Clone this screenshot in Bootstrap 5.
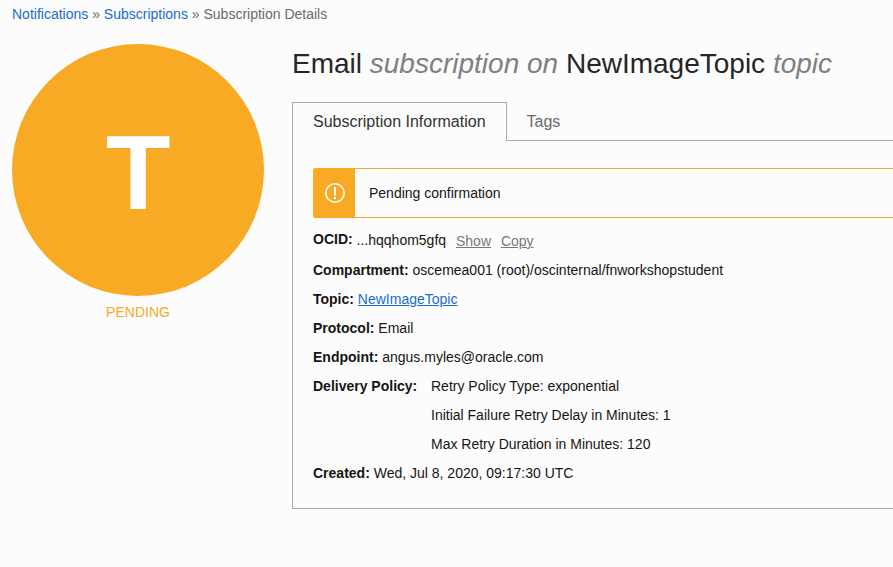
<!DOCTYPE html>
<html lang="en"><head><meta charset="utf-8"><title>Subscription Details</title>
<link rel="stylesheet" href="https://cdn.jsdelivr.net/npm/bootstrap@5.3.0/dist/css/bootstrap.min.css">
<style>
html,body{height:100%;overflow:hidden}
body{background:#fcfcfc;color:#161513;font:14px/20px "Liberation Sans",Arial,sans-serif}
a{color:#1a6ccd}
.crumbs{padding:4px 12px 0;color:#6b6a68;height:44px}
.crumbs .sep{color:#6b6a68}
.page-main{width:1000px;padding-left:12px}
.side{width:252px;margin-right:28px}
.disc{width:252px;height:252px;border-radius:50%;background:#f8aa25;color:#fff;font-size:106px;font-weight:700;line-height:257px;text-align:center}
.state{color:#f8aa25;margin-top:8px;text-align:center;line-height:16px}
.detail{width:708px}
.heading{font-size:28px;line-height:40px;font-weight:400;color:#262626;margin:0 0 18px}
.heading em{color:#808080}
.tabbar{border-bottom:1px solid #aaa;height:39px}
.tabbar .tab-on,.tabbar .tab-off{font-size:16px;line-height:20px;height:39px;padding:9px 20px;text-decoration:none}
.tabbar .tab-on{color:#333;background:#fcfcfc;border:1px solid #aaa;border-bottom:0}
.tabbar .tab-off{color:#6b6a68;padding-top:10px}
.panel-box{border:1px solid #aaa;border-top:0;padding:27px 20px 16px;height:368px}
.pending{border:1px solid #f0a92c;border-right:0;border-left:0;border-radius:3px 0 0 3px;height:50px}
.pending-ic{width:42px;height:50px;padding-left:2px;background:#f8aa25;border-radius:3px 0 0 3px}
.pending-tx{padding-left:14px;color:#161513}
.line{height:29px;line-height:20px;margin:0}
.line-first{height:30px;margin-top:12px}
.line-first b{vertical-align:1px;line-height:1}
.acts{color:#7a7977;margin-left:6px;vertical-align:-1px;line-height:1}
.policy-key{width:118px}
</style></head>
<body>
<div class="crumbs"><a href="#" class="text-decoration-none">Notifications</a> <span class="sep">»</span> <a href="#" class="text-decoration-none">Subscriptions</a> <span class="sep">»</span> Subscription Details</div>
<div class="page-main d-flex">
<div class="side flex-shrink-0">
<div class="disc">T</div>
<div class="state">PENDING</div>
</div>
<div class="detail flex-shrink-0">
<h1 class="heading">Email <em>subscription on</em> NewImageTopic <em>topic</em></h1>
<div class="tabbar d-flex">
<a class="tab-on" href="#">Subscription Information</a>
<a class="tab-off" href="#">Tags</a>
</div>
<div class="panel-box">
<div class="pending d-flex align-items-center">
<div class="pending-ic d-flex align-items-center justify-content-center flex-shrink-0">
<svg width="20" height="20" viewBox="0 0 20 20" fill="none"><circle cx="10" cy="10" r="9.2" stroke="#fff" stroke-width="1.5"/><rect x="9" y="4" width="2" height="8.5" fill="#fff"/><rect x="9" y="14" width="2" height="2" fill="#fff"/></svg>
</div>
<div class="pending-tx">Pending confirmation</div>
</div>
<div class="line line-first"><b>OCID:</b> ...hqqhom5gfq <a href="#" class="acts">Show</a> <a href="#" class="acts">Copy</a></div>
<div class="line"><b>Compartment:</b> oscemea001 (root)/oscinternal/fnworkshopstudent</div>
<div class="line"><b>Topic:</b> <a href="#">NewImageTopic</a></div>
<div class="line"><b>Protocol:</b> Email</div>
<div class="line"><b>Endpoint:</b> angus.myles@oracle.com</div>
<div class="d-flex">
<div class="policy-key flex-shrink-0"><b>Delivery Policy:</b></div>
<div>
<div class="line">Retry Policy Type: exponential</div>
<div class="line">Initial Failure Retry Delay in Minutes: 1</div>
<div class="line">Max Retry Duration in Minutes: 120</div>
</div>
</div>
<div class="line"><b>Created:</b> Wed, Jul 8, 2020, 09:17:30 UTC</div>
</div>
</div>
</div>
</body></html>
